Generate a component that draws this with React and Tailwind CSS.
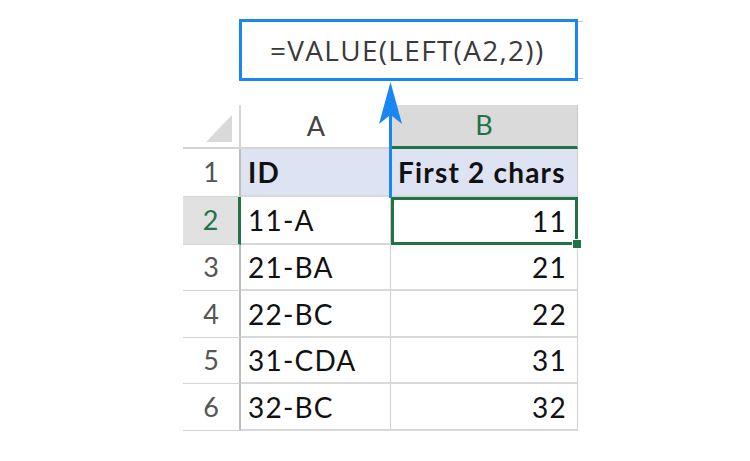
import React from 'react';

const rows = [
  { n: '1', a: 'ID', b: 'First 2 chars', head: true },
  { n: '2', a: '11-A', b: '11', active: true },
  { n: '3', a: '21-BA', b: '21' },
  { n: '4', a: '22-BC', b: '22' },
  { n: '5', a: '31-CDA', b: '31' },
  { n: '6', a: '32-BC', b: '32' },
];

const heights = ['h-[48px]', 'h-[48px]', 'h-[46px]', 'h-[47px]', 'h-[46px]', 'h-[47px]'];

function Arrow() {
  return (
    <svg className="absolute left-[378px] top-[80px]" width="28" height="120" viewBox="0 0 28 120">
      <rect x="11" y="20" width="3" height="98" fill="#1a86f2" />
      <path d="M12.5 2 L24 44 L14 36 L11 36 L1 44 Z" fill="#1a86f2" />
    </svg>
  );
}

export default function App() {
  return (
    <div
      className="relative w-[750px] h-[461px] bg-white overflow-hidden"
      style={{ fontFamily: 'Lato, "Open Sans", sans-serif' }}
    >
      {/* formula bar */}
      <div className="flex pt-[19px] pl-[239px]">
        <div className="w-[339px] h-[62px] border-[3px] border-[#1a86f2] flex items-center pl-[28px]">
          <span className="text-[28px] text-[#3a3a3a] tracking-[1.3px]" style={{ fontFamily: '"Open Sans", sans-serif' }}>
            =VALUE(LEFT(A2,2))
          </span>
        </div>
        <div className="w-[5px] h-[62px] flex flex-col justify-between py-[2px]">
          <div className="h-px bg-[#c8c8c8]" />
          <div className="h-px bg-[#c8c8c8]" />
        </div>
      </div>

      {/* sheet */}
      <div className="ml-[183px] mt-[24px] w-[395px]">
        {/* column headers */}
        <div className="flex h-[44px]">
          <div className="w-[58px] border-r-2 border-b-2 border-[#d4d4d4] flex items-end justify-end pr-[7px] pb-[5px]">
            <div className="w-0 h-0 border-l-[26px] border-l-transparent border-b-[27px] border-b-[#d9d9d9]" />
          </div>
          <div className="w-[150px] border-b-2 border-[#d4d4d4] flex items-center justify-center text-[27px] text-[#444]">
            A
          </div>
          <div className="w-[187px] bg-[#dadada] border-b-[3px] border-b-[#217346] border-r border-r-[#c8c8c8] flex items-center justify-center text-[27px] text-[#217346]">
            B
          </div>
        </div>

        {rows.map((r, i) => (
          <div key={r.n} className={`flex ${heights[i]}`}>
            <div
              className={`w-[58px] flex items-center justify-center text-[27px] border-b border-b-[#d4d4d4] ${
                r.active
                  ? 'bg-[#e1e1e1] text-[#217346] border-r-[3px] border-r-[#217346]'
                  : 'text-[#555] border-r-2 border-r-[#bdbdbd]'
              }`}
            >
              {r.n}
            </div>
            <div
              className={`w-[150px] flex items-center pl-[7px] text-[28px] tracking-[1.2px] text-[#111] border-b-2 border-b-[#d8d8d8] border-r border-r-[#d0d0d0] ${
                r.head ? 'bg-[#dde3f2] font-bold' : ''
              }`}
            >
              {r.a}
            </div>
            {r.active ? (
              <div className="relative w-[187px] flex items-center justify-end pr-[8px] text-[28px] tracking-[1.2px] text-[#111] border-[3px] border-[#217346]">
                {r.b}
                <div className="absolute right-[-7px] bottom-[-7px] w-[10px] h-[10px] bg-[#217346] border border-white" />
              </div>
            ) : (
              <div
                className={`w-[187px] flex items-center text-[28px] tracking-[1.2px] text-[#111] border-r border-r-[#d0d0d0] border-b-2 border-b-[#d8d8d8] ${
                  r.head ? 'bg-[#dde3f2] font-bold justify-start pl-[7px] tracking-[1.1px]' : 'justify-end pr-[10px]'
                }`}
              >
                {r.b}
              </div>
            )}
          </div>
        ))}
      </div>

      <Arrow />
    </div>
  );
}
